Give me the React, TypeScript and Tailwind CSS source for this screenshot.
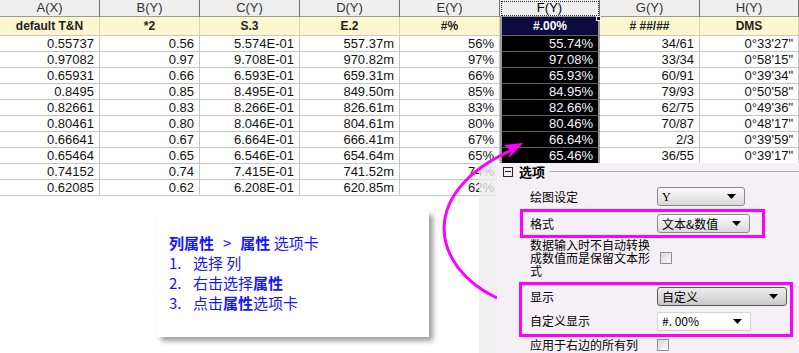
const cols = ["A(X)", "B(Y)", "C(Y)", "D(Y)", "E(Y)", "F(Y)", "G(Y)", "H(Y)"];
const names = ["default T&N", "*2", "S.3", "E.2", "#%", "#.00%", "# ##/##", "DMS"];

// the last two rows of F-H sit under the properties panel
const rows: string[][] = [
  ["0.55737", "0.56", "5.574E-01", "557.37m", "56%", "55.74%", "34/61", "0°33'27\""],
  ["0.97082", "0.97", "9.708E-01", "970.82m", "97%", "97.08%", "33/34", "0°58'15\""],
  ["0.65931", "0.66", "6.593E-01", "659.31m", "66%", "65.93%", "60/91", "0°39'34\""],
  ["0.8495", "0.85", "8.495E-01", "849.50m", "85%", "84.95%", "79/93", "0°50'58\""],
  ["0.82661", "0.83", "8.266E-01", "826.61m", "83%", "82.66%", "62/75", "0°49'36\""],
  ["0.80461", "0.80", "8.046E-01", "804.61m", "80%", "80.46%", "70/87", "0°48'17\""],
  ["0.66641", "0.67", "6.664E-01", "666.41m", "67%", "66.64%", "2/3", "0°39'59\""],
  ["0.65464", "0.65", "6.546E-01", "654.64m", "65%", "65.46%", "36/55", "0°39'17\""],
  ["0.74152", "0.74", "7.415E-01", "741.52m", "74%", "", "", ""],
  ["0.62085", "0.62", "6.208E-01", "620.85m", "62%", "", "", ""],
];

function Dropdown({ label, className, plain }: { label: string; className: string; plain?: boolean }) {
  return (
    <div
      className={`${className} h-[19px] flex items-center justify-between pl-[4px] pr-[8px] ${
        plain
          ? "bg-white border border-[#d4d4d4]"
          : "rounded-[3px] border border-[#8a8a8a] bg-gradient-to-b from-[#fbfbfb] to-[#d9d9d9]"
      }`}
    >
      <span className="leading-none">{label}</span>
      <svg width="9" height="5" viewBox="0 0 9 5">
        <path d="M0 0 H9 L4.5 5 Z" fill="#000" />
      </svg>
    </div>
  );
}

function Check() {
  return <div className="w-[12px] h-[12px] border border-[#8e8f8f] bg-gradient-to-br from-[#d8d8d8] to-[#fafafa]" />;
}

export default function App() {
  return (
    <div className="relative w-[799px] h-[353px] overflow-hidden bg-white font-['Liberation_Sans',Arial,sans-serif] text-[12px] text-black">
      {/* worksheet */}
      <div className="grid grid-cols-[100px_100px_100px_100px_100px_100px_100px_99px]">
        {cols.map((c, i) => (
          <div
            key={c}
            className={`h-[17px] flex items-center justify-center bg-[#efefef] border-b border-b-[#9a9a9a] border-r border-r-[#6f6f6f] text-[13px] ${
              i === 5 ? "outline-1 outline-dotted outline-[#333] -outline-offset-2 text-black" : "text-[#333]"
            }`}
          >
            {c}
          </div>
        ))}
        {names.map((n, i) => (
          <div
            key={n}
            className={
              i === 5
                ? "relative h-[19px] flex items-center justify-center font-bold text-white bg-[#0b0b3e] border-x-2 border-x-[#9c9c9c] border-b border-b-[#666]"
                : "h-[19px] flex items-center justify-center font-bold text-[#222] bg-[#fcf7cf] border-r border-r-[#dad5a8] border-b border-b-[#c8c8c8]"
            }
          >
            {n}
            {i === 5 && <div className="absolute -right-[3px] -top-[1px] w-[5px] h-[5px] bg-[#0b0b3e] border border-white" />}
          </div>
        ))}
        {rows.map((r, ri) =>
          r.map((v, ci) => (
            <div
              key={`${ri}-${ci}`}
              className={
                ci === 5
                  ? "h-[16px] flex items-center justify-end pr-[5px] bg-black text-[#f4f4ff] text-[13px] border-x-2 border-x-[#9c9c9c] border-b border-b-[#5e5e5e]"
                  : "h-[16px] flex items-center justify-end pr-[5px] text-[13px] text-[#111] border-r border-r-[#c6c6c6] border-b border-b-[#c6c6c6]"
              }
            >
              {v}
            </div>
          ))
        )}
      </div>

      {/* shading left of the panel */}
      <div className="absolute left-[479px] top-[163px] w-[18px] h-[190px] bg-[#ececec]/80" />

      {/* magenta arrow */}
      <svg className="absolute left-0 top-0 pointer-events-none" width="799" height="353">
        <path d="M497 298 C430 266 418 192 512 150" fill="none" stroke="#ff00ff" strokeWidth="3" />
        <path d="M523 143 L504 145 L511 151 L508 159 Z" fill="#ff00ff" />
      </svg>

      {/* callout */}
      <div className="absolute left-[157px] top-[211px] w-[272px] h-[126px] bg-white shadow-[4px_4px_5px_rgba(0,0,0,0.38)] pt-[22px] pl-[12px] text-[15px] leading-[20px] text-[#1414ff] font-['Noto_Sans_CJK_SC',sans-serif]">
        <div className="flex gap-[9px]">
          <b>列属性</b>
          <span>&gt;</span>
          <span>
            <b>属性</b> 选项卡
          </span>
        </div>
        <div className="flex">
          <span className="w-[24px]">1.</span>
          <span>选择 列</span>
        </div>
        <div className="flex">
          <span className="w-[24px]">2.</span>
          <span>
            右击选择<b>属性</b>
          </span>
        </div>
        <div className="flex">
          <span className="w-[24px]">3.</span>
          <span>
            点击<b>属性</b>选项卡
          </span>
        </div>
      </div>

      {/* properties panel */}
      <div className="absolute left-[497px] top-[163px] w-[302px] h-[190px] bg-[#f5f0f5] text-[12px] text-black font-['Noto_Sans_CJK_SC',sans-serif]">
        <div className="flex items-center h-[17px] pl-[6px]">
          <div className="w-[10px] h-[10px] border border-[#222] flex items-center justify-center">
            <div className="w-[6px] h-px bg-[#222]" />
          </div>
          <span className="ml-[6px] font-bold text-[13px]">选项</span>
          <div className="flex-1 h-px bg-[#a8a8a8] ml-[5px]" />
        </div>
        <div className="mt-[4px] h-[25px] flex items-center pl-[33px]">
          <span className="w-[127px]">绘图设定</span>
          <Dropdown label="Y" className="w-[88px] font-['Liberation_Serif',serif]" />
        </div>
        <div className="ml-[23px] w-[245px] h-[29px] border-[3px] border-[#ff00ff] flex items-center pl-[7px]">
          <span className="w-[127px]">格式</span>
          <Dropdown label="文本&数值" className="w-[93px]" />
        </div>
        <div className="flex pl-[33px]">
          <div className="w-[130px] leading-[13px]">数据输入时不自动转换成数值而是保留文本形式</div>
          <div className="mt-[14px]">
            <Check />
          </div>
        </div>
        <div className="mt-[5px] ml-[22px] w-[274px] h-[55px] border-[3px] border-[#ff00ff] flex flex-col">
          <div className="h-[24px] flex items-center pl-[8px]">
            <span className="w-[127px]">显示</span>
            <Dropdown label="自定义" className="w-[130px] !border-[#5a5a5a] !from-[#eeeeee] !to-[#c9c9c9]" />
          </div>
          <div className="h-[26px] flex items-center pl-[8px]">
            <span className="w-[127px]">自定义显示</span>
            <Dropdown label="#. 00%" className="w-[94px]" plain />
          </div>
        </div>
        <div className="h-[16px] flex items-center pl-[33px]">
          <span className="w-[127px] leading-[14px]">应用于右边的所有列</span>
          <Check />
        </div>
      </div>
    </div>
  );
}
